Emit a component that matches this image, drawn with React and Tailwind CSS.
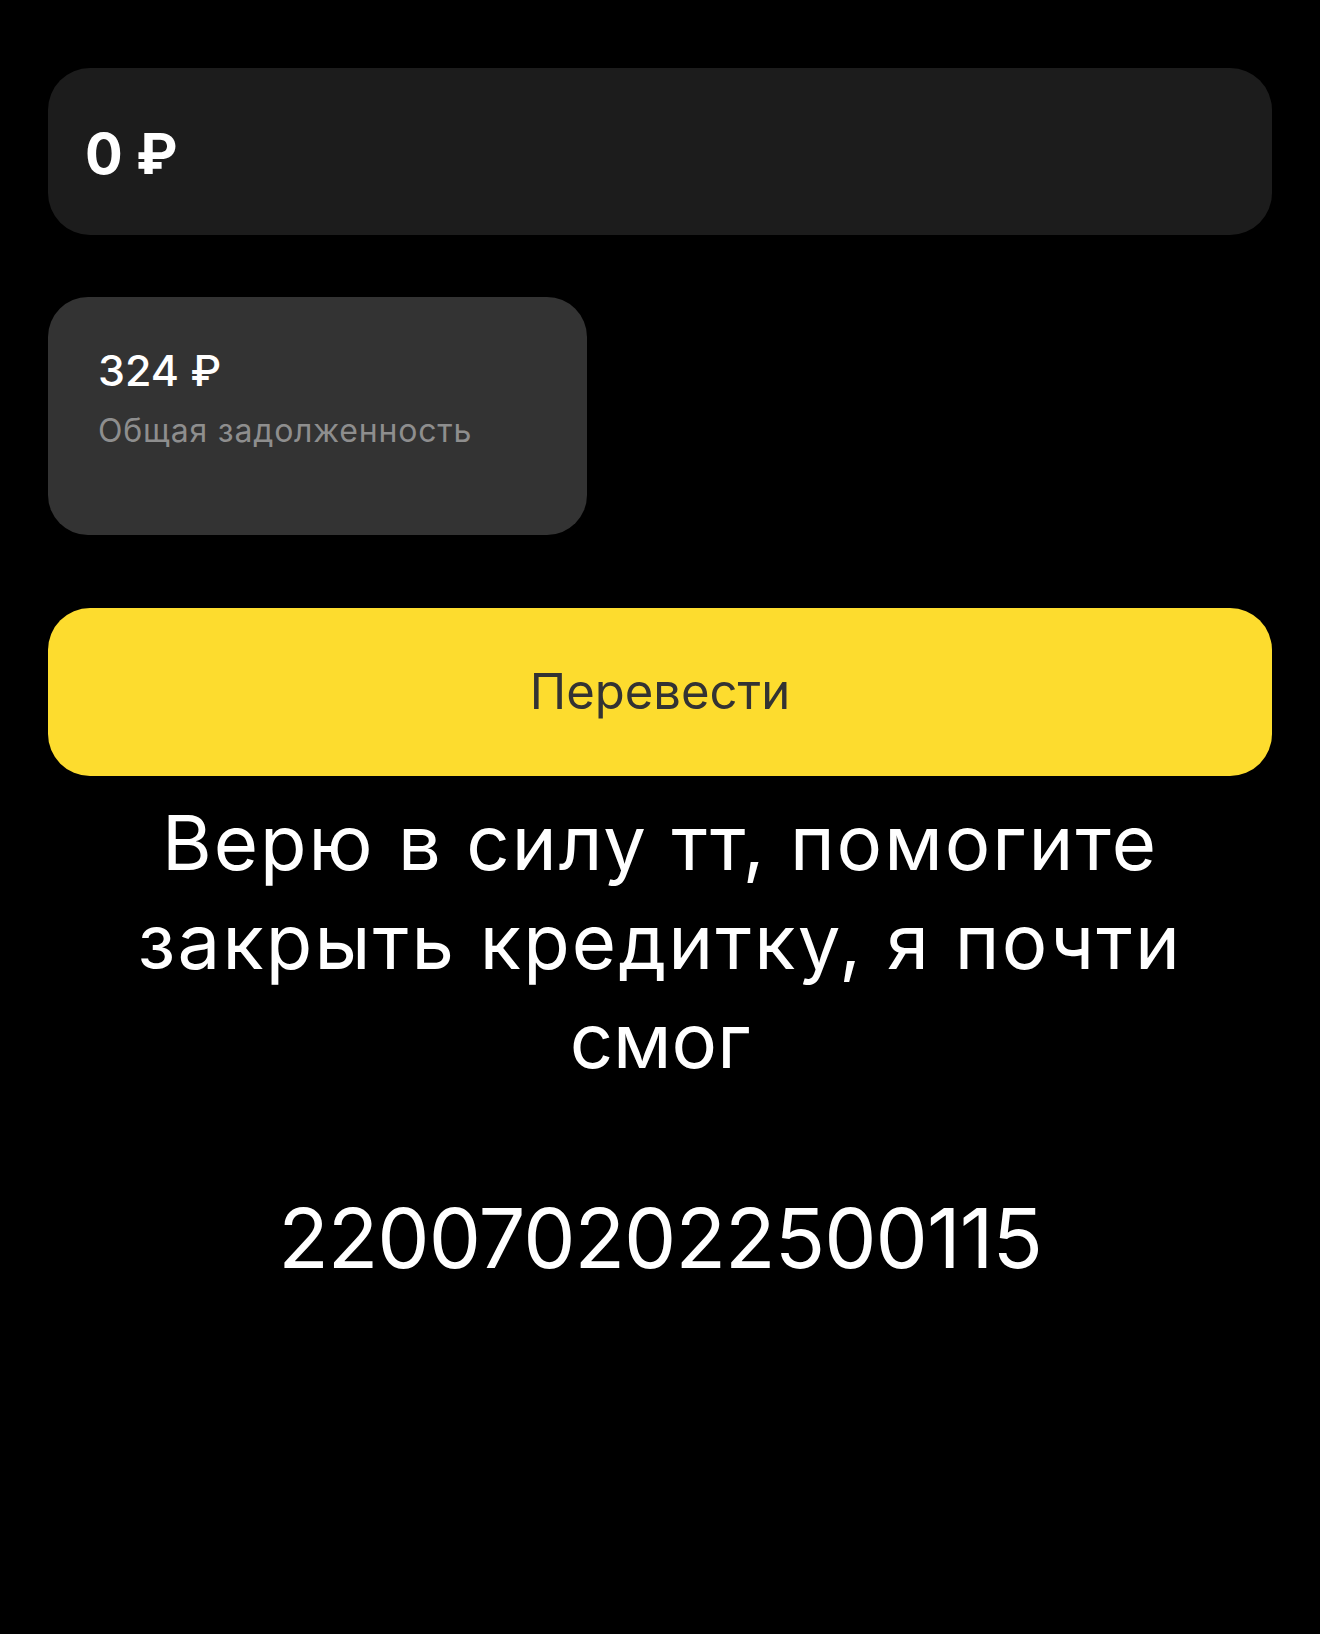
export default function App() {
  return (
    <div className="min-h-[1634px] bg-black px-12 pt-[68px] font-['Inter',sans-serif] text-white">
      <div className="flex h-[167px] items-center rounded-[42px] bg-[#1c1c1c] pl-[37px] pt-1">
        <span className="text-[56px] font-bold leading-none">0 ₽</span>
      </div>

      <div className="mt-[62px] h-[238px] w-[539px] rounded-[40px] bg-[#333333] px-[50px] pt-[52px]">
        <div className="text-[43px] font-medium leading-none">324 ₽</div>
        <div className="mt-[23px] text-[32px] leading-none tracking-[0.025em] text-[#8e8e8e]">Общая задолженность</div>
      </div>

      <button className="mt-[73px] flex h-[168px] w-full items-center justify-center rounded-[42px] bg-[#fddc2e] text-[49px] text-[#333333]">
        Перевести
      </button>

      <div className="mt-[17px] text-center leading-[99px]">
        <p className="text-[76px] tracking-[2px]">Верю в силу тт, помогите</p>
        <p className="text-[76px] tracking-[2.2px]">закрыть кредитку, я почти</p>
        <p className="text-[76px]">смог</p>
        <p className="text-[76px]">&nbsp;</p>
        <p className="text-[83px] tracking-[-1px]">2200702022500115</p>
      </div>
    </div>
  );
}
